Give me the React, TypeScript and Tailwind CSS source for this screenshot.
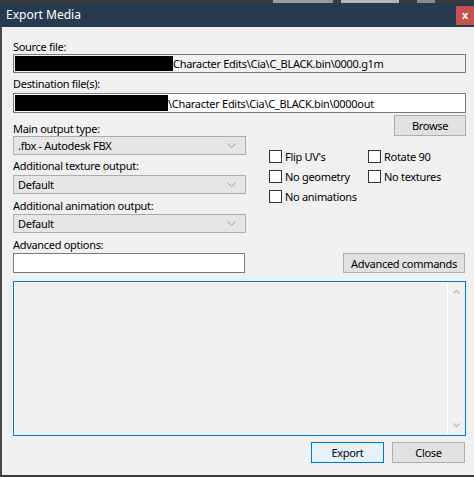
import React from 'react';

const font = { fontFamily: '"Noto Sans", "Open Sans", sans-serif' };

const Chevron: React.FC = () => (
  <svg width="9" height="5" viewBox="0 0 9 5" className="shrink-0">
    <polyline points="0.5,0.5 4.5,4.5 8.5,0.5" fill="none" stroke="#a0a0a0" strokeWidth="1" />
  </svg>
);

const Select: React.FC<{ value: string }> = ({ value }) => (
  <div className="h-[19px] w-[233px] bg-[#e5e5e5] border border-[#acacac] flex items-center justify-between pl-[4px] pr-[9px]">
    <span className="leading-[15px]">{value}</span>
    <Chevron />
  </div>
);

const Checkbox: React.FC<{ label: string }> = ({ label }) => (
  <div className="flex items-center h-[20px] gap-[3px]">
    <div className="w-[13px] h-[13px] bg-white border border-[#333333]" />
    <span className="leading-[15px] whitespace-nowrap">{label}</span>
  </div>
);

const Label: React.FC<{ children: React.ReactNode }> = ({ children }) => (
  <div className="leading-[14px] h-[14px] whitespace-nowrap">{children}</div>
);

export default function App() {
  return (
    <div className="w-[474px] h-[477px] bg-[#3c3c3c] flex flex-col overflow-hidden text-[11px] tracking-[-0.3px] text-black" style={font}>
      {/* strip of the window behind */}
      <div className="h-[3px] flex">
        <div className="w-[273px]" />
        <div className="w-[60px] bg-[#9a9a9a]" />
        <div className="w-[8px]" />
        <div className="w-[58px] bg-[#b8b8b8]" />
        <div className="w-[18px]" />
        <div className="w-[18px] bg-[#8a8a8a]" />
      </div>

      {/* title bar */}
      <div className="h-[24px] bg-[#263b50] flex items-center justify-between">
        <span className="pl-[6px] text-white text-[12px] tracking-normal leading-[16px]">Export Media</span>
        <div className="w-[18px] h-[19px] bg-[#c75050] flex items-center justify-center text-white font-bold text-[11px] leading-none pb-[2px]">
          x
        </div>
      </div>

      {/* body */}
      <div className="flex-1 mb-[2px] border-l-2 border-[#4a4a4a] bg-[#f0f0f0] pl-[11px] pr-[8px] pt-[13px] flex flex-col">
        <Label>Source file:</Label>
        <div className="h-[19px] border border-[#7a7a7a] bg-[#f0f0f0] flex items-center pl-[1px] overflow-hidden whitespace-nowrap">
          <div className="w-[158px] h-[15px] bg-black shrink-0" />
          <span className="leading-[15px]">Character Edits\Cia\C_BLACK.bin\0000.g1m</span>
        </div>

        <div className="mt-[4px]">
          <Label>Destination file(s):</Label>
        </div>
        <div className="mt-[2px] h-[20px] border border-[#7a7a7a] bg-white flex items-center pl-[1px] overflow-hidden whitespace-nowrap">
          <div className="w-[153px] h-[16px] bg-black shrink-0" />
          <span className="leading-[15px]">\Character Edits\Cia\C_BLACK.bin\0000out</span>
        </div>

        <div className="flex">
          {/* left column */}
          <div className="w-[233px] pt-[9px] flex flex-col">
            <Label>Main output type:</Label>
            <Select value=".fbx - Autodesk FBX" />
            <div className="mt-[4px]">
              <Label>Additional texture output:</Label>
            </div>
            <div className="mt-[2px]">
              <Select value="Default" />
            </div>
            <div className="mt-[5px]">
              <Label>Additional animation output:</Label>
            </div>
            <div className="mt-[1px]">
              <Select value="Default" />
            </div>
            <div className="mt-[5px]">
              <Label>Advanced options:</Label>
            </div>
            <div className="mt-[1px] h-[20px] w-[232px] bg-white border border-[#7a7a7a]" />
          </div>

          {/* right column */}
          <div className="flex-1 flex flex-col items-end pt-[2px]">
            <button className="w-[72px] h-[21px] bg-[#e1e1e1] border border-[#adadad] leading-[15px]">Browse</button>
            <div className="self-start ml-[23px] mt-[10px] grid grid-cols-[99px_auto]">
              <Checkbox label="Flip UV's" />
              <Checkbox label="Rotate 90" />
              <Checkbox label="No geometry" />
              <Checkbox label="No textures" />
              <Checkbox label="No animations" />
            </div>
            <button className="mt-[47px] mr-[1px] w-[122px] h-[20px] bg-[#e1e1e1] border border-[#adadad] leading-[15px] whitespace-nowrap">
              Advanced commands
            </button>
          </div>
        </div>

        {/* log area */}
        <div className="mt-[8px] h-[155px] border border-[#0078d7] flex">
          <div className="flex-1 border-l border-t border-white" />
          <div className="w-[18px] border-l border-white flex flex-col items-center justify-between py-[7px]">
            <svg width="7" height="5" viewBox="0 0 7 5">
              <polyline points="0.5,4.5 3.5,1.5 6.5,4.5" fill="none" stroke="#c0c0c0" strokeWidth="1.5" />
            </svg>
            <svg width="7" height="5" viewBox="0 0 7 5">
              <polyline points="0.5,0.5 3.5,3.5 6.5,0.5" fill="none" stroke="#c0c0c0" strokeWidth="1.5" />
            </svg>
          </div>
        </div>

        <div className="mt-[6px] flex justify-end gap-[8px] pr-[1px]">
          <button className="w-[73px] h-[21px] bg-[#e5f1fb] border border-[#0078d7] leading-[15px]">Export</button>
          <button className="w-[73px] h-[21px] bg-[#e1e1e1] border border-[#adadad] leading-[15px]">Close</button>
        </div>
      </div>
    </div>
  );
}
